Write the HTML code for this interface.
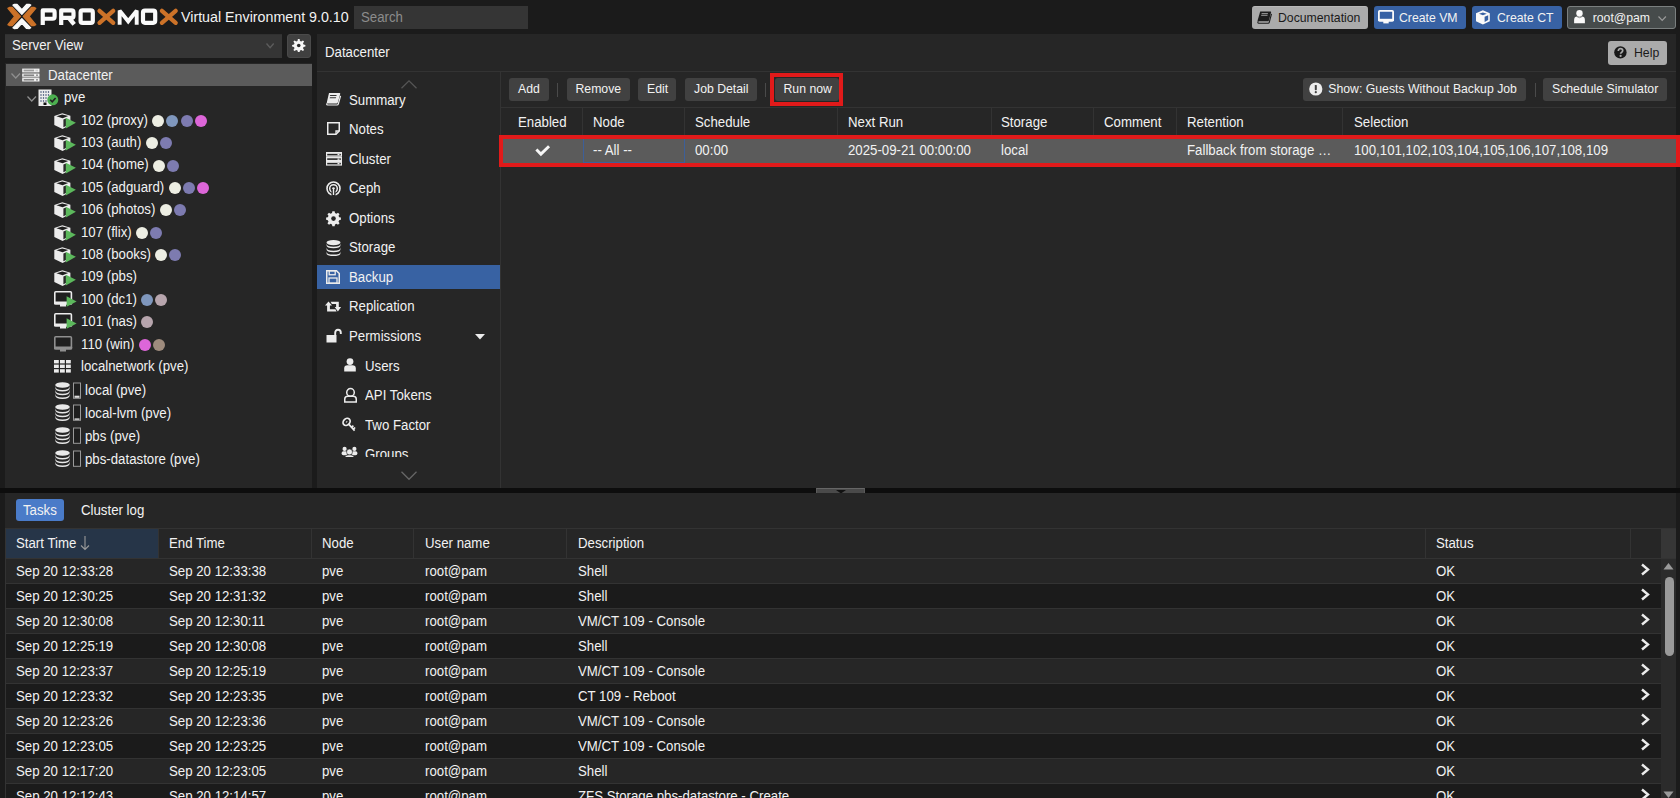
<!DOCTYPE html>
<html><head><meta charset="utf-8">
<style>
*{margin:0;padding:0;box-sizing:border-box}
html,body{width:1680px;height:798px;overflow:hidden;background:#1b1b1b;font-family:"Liberation Sans",sans-serif;color:#f2f2f2}
.a{position:absolute}
.t{position:absolute;font-size:14.7px;line-height:16px;white-space:nowrap;color:#f2f2f2;transform:scaleX(0.9014);transform-origin:0 0}
.t12{position:absolute;font-size:12.25px;line-height:16px;white-space:nowrap;color:#f2f2f2}
.btn{position:absolute;background:#414141;border-radius:3px}
.hl{position:absolute;height:1px;background:#333}
.vl{position:absolute;width:1px;background:#333}
svg{position:absolute;overflow:visible}
</style></head><body>

<!-- ============ TOP BAR ============ -->
<div id="top">
<svg style="left:0;top:0" width="180" height="34" viewBox="0 0 180 34">
<g stroke-linejoin="round" stroke-width="1.2">
<polygon points="7.9,8.3 9.4,7.4 12.3,7.4 20.5,16.47 12.3,25.6 9.4,25.6 7.9,24.7 14.6,16.47" fill="#cc7228" stroke="#cc7228"/>
<polygon points="35.8,8.3 34.3,7.4 31.4,7.4 23.2,16.47 31.4,25.6 34.3,25.6 35.8,24.7 29.1,16.47" fill="#cc7228" stroke="#cc7228"/>
<polygon points="12.9,5.1 14.5,4.3 17.1,4.4 21.86,9.6 26.6,4.4 29.2,4.3 30.8,5.1 21.86,14.3" fill="#fafafa" stroke="#fafafa"/>
<polygon points="12.9,27.8 14.5,28.6 17.1,28.5 21.86,23.3 26.6,28.5 29.2,28.6 30.8,27.8 21.86,18.6" fill="#fafafa" stroke="#fafafa"/>
</g>
<g fill="none" stroke="#fafafa" stroke-width="4.2" stroke-linejoin="round">
<path d="M42.75,25 V10.4 H52.6 Q54.6,10.4 54.6,12.4 V16.8 Q54.6,18.75 52.6,18.75 H42.75"/>
<path d="M61.2,25 V10.4 H71.4 Q73.5,10.4 73.5,12.4 V15.8 Q73.5,17.9 71.4,17.9 H61.2"/>
<path d="M68.6,17.5 L74.2,24.3" stroke-linecap="butt" stroke-width="4.4"/>
<rect x="80.6" y="10.45" width="12.2" height="12.45" rx="2"/>
<path d="M119.65,24.7 V10.6 L128.2,21.3 L136.7,10.6 V24.7" stroke-width="3.9" stroke-linejoin="miter" stroke-miterlimit="3"/>
<rect x="143" y="10.7" width="12.2" height="12.1" rx="2"/>
</g>
<g fill="none" stroke="#cc7228" stroke-width="4.3" stroke-linecap="round">
<path d="M99.5,10.8 L113.2,22.8 M113.2,10.8 L99.5,22.8"/>
<path d="M161.9,10.9 L175.7,22.8 M175.7,10.9 L161.9,22.8"/>
</g>
</svg>
<div class="a" style="left:181px;top:9px;font-size:14.25px;line-height:16px;color:#f2f2f2;white-space:nowrap">Virtual Environment 9.0.10</div>
<div class="a" style="left:354px;top:6px;width:174px;height:23px;background:#353535"></div>
<div class="t" style="left:361.4px;top:9px;color:#8c8c8c">Search</div>

<div class="btn" style="left:1252px;top:6px;width:116px;height:23px;background:#ababab;border-top:1px solid #b8b8b8"></div>
<svg style="left:1257px;top:10.5px" width="15" height="13" viewBox="0 0 15 13"><path d="M3.2,0.5 H13.6 Q14.3,0.5 14.1,1.3 L11.9,9.6 Q11.7,10.3 11,10.3 H1.2 Q0.4,10.3 0.6,9.5 Z" fill="#1d1d1d"/><path d="M1.3,10.2 Q0.2,11.9 1.8,12.2 H11.3 Q12,12.2 12.2,11.5 L14.5,2.8" fill="none" stroke="#1d1d1d" stroke-width="1.1"/><path d="M4.6,2.6 H10.9 M4.2,4.3 H10.5" stroke="#a8a8a8" stroke-width="0.9"/></svg>
<div class="t12" style="left:1278px;top:10px;color:#1a1a1a">Documentation</div>

<div class="btn" style="left:1374px;top:6px;width:92px;height:23px;background:#3862a4"></div>
<svg style="left:1377.5px;top:9.5px" width="17" height="14" viewBox="0 0 17 14"><rect x="0.9" y="0.9" width="14.2" height="10" rx="0.8" fill="none" stroke="#fafafa" stroke-width="1.8"/><rect x="0" y="8.8" width="16" height="2.2" fill="#fafafa"/><rect x="5.3" y="11" width="5.4" height="2.4" fill="#fafafa"/></svg>
<div class="t12" style="left:1399px;top:10px">Create VM</div>

<div class="btn" style="left:1472px;top:6px;width:90px;height:23px;background:#3862a4"></div>
<svg style="left:1476px;top:10px" width="14" height="15" viewBox="0 0 14 15"><path d="M6.9,0.2 L13.8,3.2 V11.3 L6.9,14.6 L0,11.3 V3.2 Z" fill="#fafafa"/><path d="M6.9,2.4 L10.8,3.8 L6.9,5.3 L3,3.8 Z" fill="#3862a4"/><path d="M8.6,6.8 L12.2,5.3 V10.1 L8.6,11.9 Z" fill="#3862a4"/></svg>
<div class="t12" style="left:1497px;top:10px">Create CT</div>

<div class="btn" style="left:1567px;top:6px;width:108.5px;height:23px;background:#464b4b;border:1px solid #7a7f7f"></div>
<svg style="left:1573.8px;top:10.2px" width="12" height="14" viewBox="0 0 12 14"><circle cx="5.5" cy="3.3" r="3.2" fill="#fafafa"/><path d="M0.1,13.2 V10 Q0.1,6.6 3.3,6.6 H7.7 Q10.9,6.6 10.9,10 V13.2 Z" fill="#fafafa"/><path d="M3.2,6.8 Q5.5,8.6 7.8,6.8" fill="none" stroke="#464b4b" stroke-width="0.6"/></svg>
<div class="t12" style="left:1592.7px;top:10px">root@pam</div>
<svg style="left:1657.8px;top:16px" width="9" height="5"><path d="M0.5,0.5 L4.2,4.3 L7.9,0.5" fill="none" stroke="#9a9a9a" stroke-width="1.2"/></svg>
</div>

<!-- ============ LEFT TREE ============ -->
<div class="a" style="left:5px;top:34px;width:277px;height:24px;background:#353535;border-top:1px solid #303030"></div>
<div class="t" style="left:12px;top:37px">Server View</div>
<svg style="left:266px;top:43px" width="9" height="6"><path d="M0.5,0.5 L4.1,4.6 L7.7,0.5" fill="none" stroke="#5c5c5c" stroke-width="1.4"/></svg>
<div class="btn" style="left:287px;top:34px;width:23.5px;height:24px;background:#404040;border:1px solid #4a4a4a"></div>
<svg style="left:292px;top:39px" width="14" height="13" viewBox="0 0 14 13"><path d="M5.9,0 H7.6 L8,1.9 L9.3,2.5 L10.9,1.4 L12.1,2.6 L11,4.2 L11.5,5.5 L13.4,5.9 V7.6 L11.5,8 L11,9.3 L12.1,10.9 L10.9,12.1 L9.3,11 L8,11.5 L7.6,13 H5.9 L5.5,11.5 L4.2,11 L2.6,12.1 L1.4,10.9 L2.5,9.3 L2,8 L0.1,7.6 V5.9 L2,5.5 L2.5,4.2 L1.4,2.6 L2.6,1.4 L4.2,2.5 L5.5,1.9 Z" fill="#f6f6f6"/><circle cx="6.75" cy="6.5" r="1.8" fill="#2a2a2a"/></svg>
<div class="a" style="left:5px;top:63px;width:306.5px;height:425px;background:#262626"></div>
<div class="a" style="left:6px;top:63.5px;width:305.5px;height:22.2px;background:#5b5b5b"></div>
<svg style="left:10.5px;top:73px" width="10" height="6"><path d="M0.5,0.5 L4.75,5 L9,0.5" fill="none" stroke="#8f8f8f" stroke-width="1.3"/></svg>
<svg style="left:21.5px;top:67.6px" width="18" height="14" viewBox="0 0 18 14"><rect x="0.2" y="0.6" width="17.3" height="3.8" fill="#f4f4f4"/><rect x="1.6" y="1.6" width="10.5" height="1.8" fill="#9c9c9c"/><rect x="13.4" y="1.6" width="2.6" height="1.8" fill="#cfcfcf"/><rect x="0.2" y="5.5" width="17.3" height="3.3" fill="#f4f4f4"/><rect x="1.6" y="6.6" width="10.5" height="1.1" fill="#555"/><rect x="14.3" y="6.5" width="1.4" height="1.3" fill="#555"/><rect x="0.2" y="8.8" width="17.3" height="1.3" fill="#a0a0a0"/><rect x="0.2" y="10.1" width="17.3" height="3.4" fill="#f4f4f4"/><rect x="1.6" y="11.3" width="10.5" height="1.1" fill="#555"/><rect x="14.3" y="11.2" width="1.4" height="1.3" fill="#555"/></svg>
<div class="t" style="left:48px;top:67.0px;">Datacenter</div>
<svg style="left:26.8px;top:95.8px" width="10" height="6"><path d="M0.5,0.5 L4.75,5 L9,0.5" fill="none" stroke="#8f8f8f" stroke-width="1.3"/></svg>
<svg style="left:38px;top:88.5px" width="22" height="18" viewBox="0 0 22 18"><rect x="0.5" y="0.5" width="13" height="16.5" fill="#ececec"/><rect x="2.4" y="2.2" width="1.2" height="1.6" fill="#4a5a7a"/><rect x="2.4" y="5.2" width="1.2" height="1.6" fill="#4a5a7a"/><rect x="2.4" y="8.2" width="1.2" height="1.6" fill="#4a5a7a"/><rect x="2.4" y="11.2" width="1.2" height="1.6" fill="#4a5a7a"/><rect x="4.9" y="2.2" width="1.2" height="1.6" fill="#4a5a7a"/><rect x="4.9" y="5.2" width="1.2" height="1.6" fill="#4a5a7a"/><rect x="4.9" y="8.2" width="1.2" height="1.6" fill="#4a5a7a"/><rect x="4.9" y="11.2" width="1.2" height="1.6" fill="#4a5a7a"/><rect x="7.4" y="2.2" width="1.2" height="1.6" fill="#4a5a7a"/><rect x="7.4" y="5.2" width="1.2" height="1.6" fill="#4a5a7a"/><rect x="7.4" y="8.2" width="1.2" height="1.6" fill="#4a5a7a"/><rect x="7.4" y="11.2" width="1.2" height="1.6" fill="#4a5a7a"/><rect x="9.9" y="2.2" width="1.2" height="1.6" fill="#4a5a7a"/><rect x="9.9" y="5.2" width="1.2" height="1.6" fill="#4a5a7a"/><rect x="9.9" y="8.2" width="1.2" height="1.6" fill="#4a5a7a"/><rect x="9.9" y="11.2" width="1.2" height="1.6" fill="#4a5a7a"/><rect x="5.5" y="13.5" width="3" height="2.5" fill="#111"/><circle cx="14.8" cy="10.8" r="5.5" fill="#4caf50"/><path d="M12.2,10.8 L14.2,12.8 L17.6,9" fill="none" stroke="#222" stroke-width="1.6"/></svg>
<div class="t" style="left:64px;top:89.0px;">pve</div>
<svg style="left:54px;top:112.8px" width="23" height="17" viewBox="0 0 23 17"><path d="M8.3,0.2 L16.4,2.7 L16.4,11.8 L8.6,16.0 L0.3,12.0 L0.3,2.9 Z" fill="#ececec"/><path d="M8.2,1.6 L14.3,3.1 L8.6,5.3 L2.4,3.3 Z" fill="#1e1e1e"/><path d="M9.4,6.6 L9.4,14.2 L12,13 L12,5.6 Z" fill="#2a2a2a"/><path d="M11.8,4.8 L21.9,9.8 L11.8,15.4 Z" fill="#5cb85c"/></svg>
<div class="t" style="left:80.8px;top:112.0px;">102 (proxy)</div>
<div class="a" style="left:152.2px;top:114.7px;width:12px;height:12px;border-radius:6px;background:#edeee3"></div>
<div class="a" style="left:166.4px;top:114.7px;width:12px;height:12px;border-radius:6px;background:#7f97bd"></div>
<div class="a" style="left:180.6px;top:114.7px;width:12px;height:12px;border-radius:6px;background:#7d7bb0"></div>
<div class="a" style="left:194.8px;top:114.7px;width:12px;height:12px;border-radius:6px;background:#dd66d9"></div>
<svg style="left:54px;top:135.2px" width="23" height="17" viewBox="0 0 23 17"><path d="M8.3,0.2 L16.4,2.7 L16.4,11.8 L8.6,16.0 L0.3,12.0 L0.3,2.9 Z" fill="#ececec"/><path d="M8.2,1.6 L14.3,3.1 L8.6,5.3 L2.4,3.3 Z" fill="#1e1e1e"/><path d="M9.4,6.6 L9.4,14.2 L12,13 L12,5.6 Z" fill="#2a2a2a"/><path d="M11.8,4.8 L21.9,9.8 L11.8,15.4 Z" fill="#5cb85c"/></svg>
<div class="t" style="left:80.8px;top:134.0px;">103 (auth)</div>
<div class="a" style="left:145.6px;top:137.1px;width:12px;height:12px;border-radius:6px;background:#edeee3"></div>
<div class="a" style="left:159.8px;top:137.1px;width:12px;height:12px;border-radius:6px;background:#7d7bb0"></div>
<svg style="left:54px;top:157.59999999999997px" width="23" height="17" viewBox="0 0 23 17"><path d="M8.3,0.2 L16.4,2.7 L16.4,11.8 L8.6,16.0 L0.3,12.0 L0.3,2.9 Z" fill="#ececec"/><path d="M8.2,1.6 L14.3,3.1 L8.6,5.3 L2.4,3.3 Z" fill="#1e1e1e"/><path d="M9.4,6.6 L9.4,14.2 L12,13 L12,5.6 Z" fill="#2a2a2a"/><path d="M11.8,4.8 L21.9,9.8 L11.8,15.4 Z" fill="#5cb85c"/></svg>
<div class="t" style="left:80.8px;top:156.0px;">104 (home)</div>
<div class="a" style="left:153.0px;top:159.5px;width:12px;height:12px;border-radius:6px;background:#edeee3"></div>
<div class="a" style="left:167.2px;top:159.5px;width:12px;height:12px;border-radius:6px;background:#7d7bb0"></div>
<svg style="left:54px;top:179.99999999999997px" width="23" height="17" viewBox="0 0 23 17"><path d="M8.3,0.2 L16.4,2.7 L16.4,11.8 L8.6,16.0 L0.3,12.0 L0.3,2.9 Z" fill="#ececec"/><path d="M8.2,1.6 L14.3,3.1 L8.6,5.3 L2.4,3.3 Z" fill="#1e1e1e"/><path d="M9.4,6.6 L9.4,14.2 L12,13 L12,5.6 Z" fill="#2a2a2a"/><path d="M11.8,4.8 L21.9,9.8 L11.8,15.4 Z" fill="#5cb85c"/></svg>
<div class="t" style="left:80.8px;top:179.0px;">105 (adguard)</div>
<div class="a" style="left:168.5px;top:181.9px;width:12px;height:12px;border-radius:6px;background:#edeee3"></div>
<div class="a" style="left:182.7px;top:181.9px;width:12px;height:12px;border-radius:6px;background:#7d7bb0"></div>
<div class="a" style="left:196.9px;top:181.9px;width:12px;height:12px;border-radius:6px;background:#dd66d9"></div>
<svg style="left:54px;top:202.39999999999998px" width="23" height="17" viewBox="0 0 23 17"><path d="M8.3,0.2 L16.4,2.7 L16.4,11.8 L8.6,16.0 L0.3,12.0 L0.3,2.9 Z" fill="#ececec"/><path d="M8.2,1.6 L14.3,3.1 L8.6,5.3 L2.4,3.3 Z" fill="#1e1e1e"/><path d="M9.4,6.6 L9.4,14.2 L12,13 L12,5.6 Z" fill="#2a2a2a"/><path d="M11.8,4.8 L21.9,9.8 L11.8,15.4 Z" fill="#5cb85c"/></svg>
<div class="t" style="left:80.8px;top:201.0px;">106 (photos)</div>
<div class="a" style="left:159.6px;top:204.3px;width:12px;height:12px;border-radius:6px;background:#edeee3"></div>
<div class="a" style="left:173.8px;top:204.3px;width:12px;height:12px;border-radius:6px;background:#7d7bb0"></div>
<svg style="left:54px;top:224.79999999999998px" width="23" height="17" viewBox="0 0 23 17"><path d="M8.3,0.2 L16.4,2.7 L16.4,11.8 L8.6,16.0 L0.3,12.0 L0.3,2.9 Z" fill="#ececec"/><path d="M8.2,1.6 L14.3,3.1 L8.6,5.3 L2.4,3.3 Z" fill="#1e1e1e"/><path d="M9.4,6.6 L9.4,14.2 L12,13 L12,5.6 Z" fill="#2a2a2a"/><path d="M11.8,4.8 L21.9,9.8 L11.8,15.4 Z" fill="#5cb85c"/></svg>
<div class="t" style="left:80.8px;top:224.0px;">107 (flix)</div>
<div class="a" style="left:136.0px;top:226.7px;width:12px;height:12px;border-radius:6px;background:#edeee3"></div>
<div class="a" style="left:150.2px;top:226.7px;width:12px;height:12px;border-radius:6px;background:#7d7bb0"></div>
<svg style="left:54px;top:247.2px" width="23" height="17" viewBox="0 0 23 17"><path d="M8.3,0.2 L16.4,2.7 L16.4,11.8 L8.6,16.0 L0.3,12.0 L0.3,2.9 Z" fill="#ececec"/><path d="M8.2,1.6 L14.3,3.1 L8.6,5.3 L2.4,3.3 Z" fill="#1e1e1e"/><path d="M9.4,6.6 L9.4,14.2 L12,13 L12,5.6 Z" fill="#2a2a2a"/><path d="M11.8,4.8 L21.9,9.8 L11.8,15.4 Z" fill="#5cb85c"/></svg>
<div class="t" style="left:80.8px;top:246.0px;">108 (books)</div>
<div class="a" style="left:155.2px;top:249.1px;width:12px;height:12px;border-radius:6px;background:#edeee3"></div>
<div class="a" style="left:169.4px;top:249.1px;width:12px;height:12px;border-radius:6px;background:#7d7bb0"></div>
<svg style="left:54px;top:269.59999999999997px" width="23" height="17" viewBox="0 0 23 17"><path d="M8.3,0.2 L16.4,2.7 L16.4,11.8 L8.6,16.0 L0.3,12.0 L0.3,2.9 Z" fill="#ececec"/><path d="M8.2,1.6 L14.3,3.1 L8.6,5.3 L2.4,3.3 Z" fill="#1e1e1e"/><path d="M9.4,6.6 L9.4,14.2 L12,13 L12,5.6 Z" fill="#2a2a2a"/><path d="M11.8,4.8 L21.9,9.8 L11.8,15.4 Z" fill="#5cb85c"/></svg>
<div class="t" style="left:80.8px;top:268.0px;">109 (pbs)</div>
<svg style="left:54.2px;top:290.99999999999994px" width="24" height="17" viewBox="0 0 24 17"><rect x="0.8" y="0.8" width="16.6" height="12" rx="1" fill="#1f1f1f" stroke="#ececec" stroke-width="1.6"/><rect x="0" y="10.6" width="18.2" height="2.8" rx="0.6" fill="#ececec"/><rect x="6" y="13" width="6" height="2.5" fill="#ececec"/><path d="M12.6,5.2 L22.6,10.5 L12.6,15.8 Z" fill="#5cb85c"/></svg>
<div class="t" style="left:80.8px;top:291.0px;">100 (dc1)</div>
<div class="a" style="left:141.2px;top:293.9px;width:12px;height:12px;border-radius:6px;background:#7f97bd"></div>
<div class="a" style="left:155.4px;top:293.9px;width:12px;height:12px;border-radius:6px;background:#b7a5ad"></div>
<svg style="left:54.2px;top:313.4px" width="24" height="17" viewBox="0 0 24 17"><rect x="0.8" y="0.8" width="16.6" height="12" rx="1" fill="#1f1f1f" stroke="#ececec" stroke-width="1.6"/><rect x="0" y="10.6" width="18.2" height="2.8" rx="0.6" fill="#ececec"/><rect x="6" y="13" width="6" height="2.5" fill="#ececec"/><path d="M12.6,5.2 L22.6,10.5 L12.6,15.8 Z" fill="#5cb85c"/></svg>
<div class="t" style="left:80.8px;top:313.0px;">101 (nas)</div>
<div class="a" style="left:141.2px;top:316.3px;width:12px;height:12px;border-radius:6px;background:#b7a5ad"></div>
<svg style="left:54.2px;top:335.8px" width="24" height="17" viewBox="0 0 24 17"><rect x="0.8" y="0.8" width="16.6" height="12" rx="1" fill="#1f1f1f" stroke="#8f8f8f" stroke-width="1.6"/><rect x="0" y="10.6" width="18.2" height="2.8" rx="0.6" fill="#8f8f8f"/><rect x="6" y="13" width="6" height="2.5" fill="#8f8f8f"/></svg>
<div class="t" style="left:80.8px;top:336.0px;">110 (win)</div>
<div class="a" style="left:138.7px;top:338.7px;width:12px;height:12px;border-radius:6px;background:#dd66d9"></div>
<div class="a" style="left:152.9px;top:338.7px;width:12px;height:12px;border-radius:6px;background:#9e8b7d"></div>
<svg style="left:54.4px;top:359.5px" width="18" height="14" viewBox="0 0 18 14"><rect x="0" y="0" width="4.8" height="3.4" fill="#ececec"/><rect x="0" y="4.6" width="4.8" height="3.4" fill="#ececec"/><rect x="0" y="9.2" width="4.8" height="3.4" fill="#ececec"/><rect x="6" y="0" width="4.8" height="3.4" fill="#ececec"/><rect x="6" y="4.6" width="4.8" height="3.4" fill="#ececec"/><rect x="6" y="9.2" width="4.8" height="3.4" fill="#ececec"/><rect x="12" y="0" width="4.8" height="3.4" fill="#ececec"/><rect x="12" y="4.6" width="4.8" height="3.4" fill="#ececec"/><rect x="12" y="9.2" width="4.8" height="3.4" fill="#ececec"/></svg>
<div class="t" style="left:80.5px;top:358.0px;">localnetwork (pve)</div>
<svg style="left:54.8px;top:381.5px" width="28" height="18" viewBox="0 0 28 18"><ellipse cx="7.5" cy="3" rx="7.3" ry="2.8" fill="#e8e8e8"/><path d="M0.2,3.9999999999999996 Q0.2,8.0 7.5,8.0 Q14.8,8.0 14.8,3.9999999999999996 L14.8,5.3999999999999995 Q14.8,9.399999999999999 7.5,9.399999999999999 Q0.2,9.399999999999999 0.2,5.3999999999999995 Z" fill="#e8e8e8"/><path d="M0.2,7.800000000000001 Q0.2,11.8 7.5,11.8 Q14.8,11.8 14.8,7.800000000000001 L14.8,9.200000000000001 Q14.8,13.2 7.5,13.2 Q0.2,13.2 0.2,9.200000000000001 Z" fill="#e8e8e8"/><path d="M0.2,11.6 Q0.2,15.6 7.5,15.6 Q14.8,15.6 14.8,11.6 L14.8,13.0 Q14.8,17.0 7.5,17.0 Q0.2,17.0 0.2,13.0 Z" fill="#e8e8e8"/><rect x="18.5" y="1" width="7" height="15.3" fill="#1f1f1f" stroke="#9a9a9a" stroke-width="1"/><rect x="19.5" y="13.7" width="5" height="2.1" fill="#e0e0e0"/></svg>
<div class="t" style="left:85.1px;top:382.0px;">local (pve)</div>
<svg style="left:54.8px;top:404.45px" width="28" height="18" viewBox="0 0 28 18"><ellipse cx="7.5" cy="3" rx="7.3" ry="2.8" fill="#e8e8e8"/><path d="M0.2,3.9999999999999996 Q0.2,8.0 7.5,8.0 Q14.8,8.0 14.8,3.9999999999999996 L14.8,5.3999999999999995 Q14.8,9.399999999999999 7.5,9.399999999999999 Q0.2,9.399999999999999 0.2,5.3999999999999995 Z" fill="#e8e8e8"/><path d="M0.2,7.800000000000001 Q0.2,11.8 7.5,11.8 Q14.8,11.8 14.8,7.800000000000001 L14.8,9.200000000000001 Q14.8,13.2 7.5,13.2 Q0.2,13.2 0.2,9.200000000000001 Z" fill="#e8e8e8"/><path d="M0.2,11.6 Q0.2,15.6 7.5,15.6 Q14.8,15.6 14.8,11.6 L14.8,13.0 Q14.8,17.0 7.5,17.0 Q0.2,17.0 0.2,13.0 Z" fill="#e8e8e8"/><rect x="18.5" y="1" width="7" height="15.3" fill="#1f1f1f" stroke="#9a9a9a" stroke-width="1"/><rect x="19.5" y="14.4" width="5" height="1.4" fill="#e0e0e0"/></svg>
<div class="t" style="left:85.1px;top:405.0px;">local-lvm (pve)</div>
<svg style="left:54.8px;top:427.4px" width="28" height="18" viewBox="0 0 28 18"><ellipse cx="7.5" cy="3" rx="7.3" ry="2.8" fill="#e8e8e8"/><path d="M0.2,3.9999999999999996 Q0.2,8.0 7.5,8.0 Q14.8,8.0 14.8,3.9999999999999996 L14.8,5.3999999999999995 Q14.8,9.399999999999999 7.5,9.399999999999999 Q0.2,9.399999999999999 0.2,5.3999999999999995 Z" fill="#e8e8e8"/><path d="M0.2,7.800000000000001 Q0.2,11.8 7.5,11.8 Q14.8,11.8 14.8,7.800000000000001 L14.8,9.200000000000001 Q14.8,13.2 7.5,13.2 Q0.2,13.2 0.2,9.200000000000001 Z" fill="#e8e8e8"/><path d="M0.2,11.6 Q0.2,15.6 7.5,15.6 Q14.8,15.6 14.8,11.6 L14.8,13.0 Q14.8,17.0 7.5,17.0 Q0.2,17.0 0.2,13.0 Z" fill="#e8e8e8"/><rect x="18.5" y="1" width="7" height="15.3" fill="#1f1f1f" stroke="#9a9a9a" stroke-width="1"/></svg>
<div class="t" style="left:85.1px;top:428.0px;">pbs (pve)</div>
<svg style="left:54.8px;top:450.34999999999997px" width="28" height="18" viewBox="0 0 28 18"><ellipse cx="7.5" cy="3" rx="7.3" ry="2.8" fill="#e8e8e8"/><path d="M0.2,3.9999999999999996 Q0.2,8.0 7.5,8.0 Q14.8,8.0 14.8,3.9999999999999996 L14.8,5.3999999999999995 Q14.8,9.399999999999999 7.5,9.399999999999999 Q0.2,9.399999999999999 0.2,5.3999999999999995 Z" fill="#e8e8e8"/><path d="M0.2,7.800000000000001 Q0.2,11.8 7.5,11.8 Q14.8,11.8 14.8,7.800000000000001 L14.8,9.200000000000001 Q14.8,13.2 7.5,13.2 Q0.2,13.2 0.2,9.200000000000001 Z" fill="#e8e8e8"/><path d="M0.2,11.6 Q0.2,15.6 7.5,15.6 Q14.8,15.6 14.8,11.6 L14.8,13.0 Q14.8,17.0 7.5,17.0 Q0.2,17.0 0.2,13.0 Z" fill="#e8e8e8"/><rect x="18.5" y="1" width="7" height="15.3" fill="#1f1f1f" stroke="#9a9a9a" stroke-width="1"/></svg>
<div class="t" style="left:85.1px;top:451.0px;">pbs-datastore (pve)</div>


<!-- ============ CONTENT ============ -->
<div class="a" style="left:317px;top:34px;width:1359px;height:454px;background:#262626"></div>
<div class="t" style="left:325.2px;top:44px">Datacenter</div>
<div class="btn" style="left:1608px;top:41px;width:59px;height:24px;background:#ababab"></div>
<svg style="left:1614px;top:46px" width="13" height="13" viewBox="0 0 13 13"><circle cx="6.4" cy="6.4" r="6.2" fill="#1a1a1a"/><path d="M4.3,4.9 Q4.3,2.7 6.5,2.7 Q8.7,2.7 8.7,4.6 Q8.7,5.8 7.5,6.4 Q6.6,6.9 6.6,7.8" fill="none" stroke="#ababab" stroke-width="1.7"/><circle cx="6.6" cy="9.9" r="1.1" fill="#ababab"/></svg>
<div class="t12" style="left:1634px;top:45px;color:#1a1a1a">Help</div>
<div class="hl" style="left:317px;top:71px;width:1359px"></div>
<div class="vl" style="left:500px;top:72px;height:416px"></div>
<div class="a" style="left:317px;top:265px;width:183px;height:24px;background:#3862a3"></div>
<svg style="left:401px;top:80px" width="16" height="9"><path d="M0.5,8.3 L8,0.8 L15.5,8.3" fill="none" stroke="#555" stroke-width="1.3"/></svg>
<div class="a" style="left:317px;top:72px;width:183px;height:385px;overflow:hidden">
<svg style="left:9px;top:20.4px" width="16" height="15"><path d="M3,1 H13.5 Q14.5,1 14.2,2 L11.8,10.5 Q11.5,11.5 10.5,11.5 H1.8 Q0.5,11.5 0.8,10.5 Z" fill="#ececec"/><path d="M1.2,11.5 Q0,12.8 1.6,13 H11 Q12,13 12.3,12 L14.6,3.8" fill="none" stroke="#ececec" stroke-width="1.2"/><rect x="5" y="3" width="6.5" height="1.1" fill="#333" transform="skewX(-15)"/><rect x="5.3" y="5.2" width="6.2" height="1.1" fill="#333" transform="skewX(-15)"/></svg>
<div class="t" style="left:31.600000000000023px;top:20.0px;">Summary</div>
<svg style="left:9.5px;top:50.0px" width="16" height="15"><path d="M0.75,0.75 H12.25 V9 L9,12.25 H0.75 Z" fill="none" stroke="#ececec" stroke-width="1.5"/><path d="M12.25,9 H9 V12.25" fill="none" stroke="#ececec" stroke-width="1.3"/></svg>
<div class="t" style="left:31.600000000000023px;top:49.0px;">Notes</div>
<svg style="left:9px;top:79.5px" width="16" height="15"><rect x="0.6" y="0.6" width="14.8" height="3.4" fill="none" stroke="#ececec" stroke-width="1.2"/><rect x="0" y="0.6" width="16" height="1.2" fill="#ececec"/><rect x="11.5" y="2.0" width="2" height="1.3" fill="#ececec"/><rect x="0.6" y="5.1" width="14.8" height="3.4" fill="none" stroke="#ececec" stroke-width="1.2"/><rect x="0" y="5.1" width="16" height="1.2" fill="#ececec"/><rect x="11.5" y="6.5" width="2" height="1.3" fill="#ececec"/><rect x="0.6" y="9.6" width="14.8" height="3.4" fill="none" stroke="#ececec" stroke-width="1.2"/><rect x="0" y="9.6" width="16" height="1.2" fill="#ececec"/><rect x="11.5" y="11.0" width="2" height="1.3" fill="#ececec"/></svg>
<div class="t" style="left:31.600000000000023px;top:79.0px;">Cluster</div>
<svg style="left:9px;top:109.1px" width="16" height="15"><g fill="none" stroke="#ececec"><circle cx="7.5" cy="7.5" r="6.5" stroke-width="1.6"/><circle cx="7.5" cy="7.5" r="3.8" stroke-width="1.5"/></g><circle cx="7.5" cy="7.5" r="1.3" fill="#ececec"/><rect x="5.5" y="8" width="4" height="7" fill="#262626"/><rect x="6.8" y="7.5" width="1.4" height="6.5" fill="#ececec"/></svg>
<div class="t" style="left:31.600000000000023px;top:108.0px;">Ceph</div>
<svg style="left:9px;top:138.6px" width="16" height="15"><path d="M6.2,0.3 H8.8 L9.2,2.3 L10.9,3.1 L12.6,1.9 L14.4,3.7 L13.2,5.4 L13.9,7.1 L15.9,7.5 V10 L13.9,10.4 L13.2,12.1 L14.4,13.8 L12.6,15.6 L10.9,14.4 L9.2,15.2 L8.8,17.2 H6.2 L5.8,15.2 L4.1,14.4 L2.4,15.6 L0.6,13.8 L1.8,12.1 L1.1,10.4 L-0.9,10 V7.5 L1.1,7.1 L1.8,5.4 L0.6,3.7 L2.4,1.9 L4.1,3.1 L5.8,2.3 Z" transform="translate(0.9,0) scale(0.88)" fill="#ececec"/><circle cx="7.5" cy="7.6" r="2.3" fill="#262626"/></svg>
<div class="t" style="left:31.600000000000023px;top:138.0px;">Options</div>
<svg style="left:9px;top:168.2px" width="16" height="15"><ellipse cx="7.5" cy="2.6" rx="7" ry="2.6" fill="#ececec"/><path d="M0.5,3.6 Q0.5,6.800000000000001 7.5,6.800000000000001 Q14.5,6.800000000000001 14.5,3.6 V5.1 Q14.5,8.3 7.5,8.3 Q0.5,8.3 0.5,5.1 Z" fill="#ececec"/><path d="M0.5,7.5 Q0.5,10.7 7.5,10.7 Q14.5,10.7 14.5,7.5 V9.0 Q14.5,12.2 7.5,12.2 Q0.5,12.2 0.5,9.0 Z" fill="#ececec"/><path d="M0.5,11.4 Q0.5,14.600000000000001 7.5,14.600000000000001 Q14.5,14.600000000000001 14.5,11.4 V12.9 Q14.5,16.1 7.5,16.1 Q0.5,16.1 0.5,12.9 Z" fill="#ececec"/></svg>
<div class="t" style="left:31.600000000000023px;top:167.0px;">Storage</div>
<svg style="left:9px;top:197.7px" width="16" height="15"><path d="M0.75,0.75 H10.5 L13.25,3.5 V13.25 H0.75 Z" fill="none" stroke="#ececec" stroke-width="1.5"/><rect x="3.2" y="0.75" width="6" height="4" fill="none" stroke="#ececec" stroke-width="1.3"/><rect x="3" y="8" width="8" height="5.25" fill="none" stroke="#ececec" stroke-width="1.3"/></svg>
<div class="t" style="left:31.600000000000023px;top:197.0px;">Backup</div>
<svg style="left:9px;top:227.2px" width="16" height="15"><path d="M2.5,2.55 L6,6.45 H3.9 V10.3 H9.4 L10.6,12.45 H1.1 V6.45 H-1 Z" fill="#ececec"/><path d="M4.6,2.75 H12.8 V7.9 H15.1 L11.9,12.45 L8.7,7.9 H10.1 V4.95 H5.9 Z" fill="#ececec"/></svg>
<div class="t" style="left:31.600000000000023px;top:226.0px;">Replication</div>
<svg style="left:9px;top:256.8px" width="16" height="15"><path d="M9.2,6 V3.8 Q9.2,0.8 12,0.8 Q14.8,0.8 14.8,3.8 V5" fill="none" stroke="#ececec" stroke-width="1.9"/><rect x="0.5" y="6" width="10" height="7.5" fill="#ececec"/></svg>
<div class="t" style="left:31.600000000000023px;top:256.0px;">Permissions</div>
<svg style="left:26.69999999999999px;top:286.3px" width="16" height="15"><circle cx="6" cy="3.6" r="3.4" fill="#ececec"/><path d="M0.2,13.5 V10.5 Q0.2,7.3 3.5,7.3 H8.5 Q11.8,7.3 11.8,10.5 V13.5 Z" fill="#ececec"/></svg>
<div class="t" style="left:47.69999999999999px;top:286.0px;">Users</div>
<svg style="left:26.5px;top:315.9px" width="16" height="15"><circle cx="6.5" cy="4.4" r="3.8" fill="none" stroke="#ececec" stroke-width="1.5"/><path d="M0.75,14 V11 Q0.75,8.2 3.8,8.2 H9.2 Q12.25,8.2 12.25,11 V14 Z" fill="none" stroke="#ececec" stroke-width="1.5"/></svg>
<div class="t" style="left:47.69999999999999px;top:315.0px;">API Tokens</div>
<svg style="left:26px;top:345.4px" width="16" height="15"><ellipse cx="3.6" cy="4.9" rx="3.9" ry="3.1" transform="rotate(-45 3.6 4.9)" fill="none" stroke="#ececec" stroke-width="1.8"/><ellipse cx="3.6" cy="4.9" rx="1" ry="0.5" transform="rotate(-45 3.6 4.9)" fill="#ececec"/><path d="M5.9,7.4 L11.6,13.6 M8.6,10.4 L10.4,8.7 M10.3,12.2 L12.1,10.5" fill="none" stroke="#ececec" stroke-width="1.7"/></svg>
<div class="t" style="left:47.69999999999999px;top:345.0px;">Two Factor</div>
<svg style="left:25px;top:375.0px" width="16" height="15"><circle cx="2.6" cy="1.9" r="2.1" fill="#ececec"/><circle cx="12.4" cy="1.9" r="2.1" fill="#ececec"/><rect x="-0.4" y="4.2" width="5.8" height="4" rx="1.8" fill="#ececec"/><rect x="9.6" y="4.2" width="5.8" height="4" rx="1.8" fill="#ececec"/><circle cx="7.5" cy="5" r="3" fill="#ececec" stroke="#262626" stroke-width="0.6"/><path d="M2.8,10.6 Q3.2,8 6,8 H9 Q11.8,8 12.2,10.6 Z" fill="#ececec" stroke="#262626" stroke-width="0.5"/></svg>
<div class="t" style="left:47.69999999999999px;top:374.0px;">Groups</div>
</div>
<svg style="left:475px;top:333.5px" width="11" height="6"><path d="M0,0 H10 L5,5.5 Z" fill="#ececec"/></svg>
<svg style="left:401px;top:471px" width="16" height="9"><path d="M0.5,0.8 L8,8.3 L15.5,0.8" fill="none" stroke="#666" stroke-width="1.3"/></svg>

<div class="btn" style="left:509.3px;top:77.5px;width:39.599999999999966px;height:23.400000000000006px;background:#414141"></div>
<div class="t12" style="left:518px;top:81.0px;">Add</div>
<div class="btn" style="left:566.7px;top:77.5px;width:63.0px;height:23.400000000000006px;background:#414141"></div>
<div class="t12" style="left:575.5px;top:81.0px;">Remove</div>
<div class="btn" style="left:638px;top:77.5px;width:38px;height:23.400000000000006px;background:#414141"></div>
<div class="t12" style="left:647px;top:81.0px;">Edit</div>
<div class="btn" style="left:685.3px;top:77.5px;width:71.30000000000007px;height:23.400000000000006px;background:#414141"></div>
<div class="t12" style="left:694px;top:81.0px;">Job Detail</div>
<div class="btn" style="left:775px;top:77.5px;width:64px;height:23.400000000000006px;background:#414141"></div>
<div class="t12" style="left:783.5px;top:81.0px;">Run now</div>
<div class="a" style="left:557.2px;top:83px;width:1px;height:14px;background:#4a4a4a"></div>
<div class="a" style="left:764.9px;top:83px;width:1px;height:14px;background:#4a4a4a"></div>
<div class="btn" style="left:1303.3px;top:77.5px;width:222.5px;height:23.400000000000006px;background:#414141"></div>
<svg style="left:1309px;top:82px" width="14" height="14"><circle cx="6.8" cy="7" r="6.6" fill="#ececec"/><rect x="5.8" y="3" width="2" height="5.2" rx="0.6" fill="#414141"/><circle cx="6.8" cy="10.2" r="1.1" fill="#414141"/></svg>
<div class="t12" style="left:1328.3px;top:81.0px;">Show: Guests Without Backup Job</div>
<div class="a" style="left:1535px;top:83px;width:1px;height:14px;background:#4a4a4a"></div>
<div class="btn" style="left:1543.3px;top:77.5px;width:123.40000000000009px;height:23.400000000000006px;background:#414141"></div>
<div class="t12" style="left:1552px;top:81.0px;">Schedule Simulator</div>
<div class="hl" style="left:501px;top:107px;width:1175px"></div>
<div class="vl" style="left:582.2px;top:108px;height:27px"></div>
<div class="vl" style="left:684.1px;top:108px;height:27px"></div>
<div class="vl" style="left:836.9px;top:108px;height:27px"></div>
<div class="vl" style="left:991.2px;top:108px;height:27px"></div>
<div class="vl" style="left:1092.9px;top:108px;height:27px"></div>
<div class="vl" style="left:1175.9px;top:108px;height:27px"></div>
<div class="vl" style="left:1342.0px;top:108px;height:27px"></div>
<div class="t" style="left:517.6px;top:114.0px;">Enabled</div>
<div class="t" style="left:592.7px;top:114.0px;">Node</div>
<div class="t" style="left:695.4px;top:114.0px;">Schedule</div>
<div class="t" style="left:848.1px;top:114.0px;">Next Run</div>
<div class="t" style="left:1001.3px;top:114.0px;">Storage</div>
<div class="t" style="left:1103.75px;top:114.0px;">Comment</div>
<div class="t" style="left:1187px;top:114.0px;">Retention</div>
<div class="t" style="left:1353.75px;top:114.0px;">Selection</div>
<div class="a" style="left:501px;top:138px;width:1175px;height:26px;background:#5b5b5b"></div>
<div class="a" style="left:583px;top:138px;width:101.6px;height:25px;border:1px solid #3d5f99;border-top:none"></div>
<svg style="left:535.5px;top:145.5px" width="14" height="11"><path d="M1.4,4.6 L4.9,8.1 L12,1.2" fill="none" stroke="#f6f6f6" stroke-width="2.9" stroke-linecap="square"/></svg>
<div class="t" style="left:592.7px;top:142.0px;">-- All --</div>
<div class="t" style="left:695.4px;top:142.0px;">00:00</div>
<div class="t" style="left:848.1px;top:142.0px;">2025-09-21 00:00:00</div>
<div class="t" style="left:1001.3px;top:142.0px;">local</div>
<div class="t" style="left:1187px;top:142.0px;">Fallback from storage …</div>
<div class="t" style="left:1353.75px;top:142.0px;">100,101,102,103,104,105,106,107,108,109</div>
<div class="a" style="left:499px;top:135px;width:1181px;height:32px;border:4px solid #e11a1a"></div>
<div class="a" style="left:770px;top:73px;width:73px;height:32.5px;border:4px solid #e11a1a"></div>


<!-- ============ SPLITTER ============ -->
<div class="a" style="left:0;top:488px;width:1680px;height:5px;background:#0d0d0d"></div>
<div class="a" style="left:816px;top:488px;width:49px;height:5px;background:#4a4a4a;border-top:1px solid #666;border-left:1px solid #5a5a5a;border-right:1px solid #5a5a5a"></div>
<svg style="left:836px;top:489.5px" width="11" height="4"><path d="M0,0 H10 L5,3.5 Z" fill="#111"/></svg>

<!-- ============ BOTTOM ============ -->
<div class="a" style="left:5px;top:493px;width:1671px;height:305px;background:#262626"></div>
<div class="btn" style="left:16px;top:499px;width:48px;height:22px;background:#4a7bc8"></div>
<div class="t" style="left:23px;top:502px">Tasks</div>
<div class="t" style="left:81px;top:502px">Cluster log</div>
<div class="hl" style="left:5px;top:528px;width:1671px"></div>
<div class="vl" style="left:5px;top:528px;height:270px"></div>
<div class="a" style="left:6px;top:529px;width:152.5px;height:29px;background:#263548"></div>
<div class="a" style="left:1661px;top:529px;width:15px;height:29px;background:#363636"></div>
<div class="vl" style="left:158.0px;top:529px;height:29px"></div>
<div class="vl" style="left:310.8px;top:529px;height:29px"></div>
<div class="vl" style="left:413.3px;top:529px;height:29px"></div>
<div class="vl" style="left:565.7px;top:529px;height:29px"></div>
<div class="vl" style="left:1425.3px;top:529px;height:29px"></div>
<div class="vl" style="left:1630.3px;top:529px;height:29px"></div>
<div class="hl" style="left:6px;top:558px;width:1670px"></div>
<div class="t" style="left:16px;top:535.0px;">Start Time</div>
<div class="t" style="left:169.3px;top:535.0px;">End Time</div>
<div class="t" style="left:322.4px;top:535.0px;">Node</div>
<div class="t" style="left:424.7px;top:535.0px;">User name</div>
<div class="t" style="left:577.6px;top:535.0px;">Description</div>
<div class="t" style="left:1436.3px;top:535.0px;">Status</div>
<svg style="left:80px;top:535px" width="10" height="16"><path d="M5,1 V14.5 M1,10.5 L5,14.5 L9,10.5" fill="none" stroke="#9a9a9a" stroke-width="1.1"/></svg>
<div class="a" style="left:6px;top:558.5px;width:1655px;height:25px;background:#262626"></div>
<div class="hl" style="left:6px;top:583.0px;width:1655px"></div>
<div class="t" style="left:16px;top:563.0px;">Sep 20 12:33:28</div>
<div class="t" style="left:169.3px;top:563.0px;">Sep 20 12:33:38</div>
<div class="t" style="left:322.4px;top:563.0px;">pve</div>
<div class="t" style="left:424.7px;top:563.0px;">root@pam</div>
<div class="t" style="left:577.6px;top:563.0px;">Shell</div>
<div class="t" style="left:1436.3px;top:563.0px;">OK</div>
<svg style="left:1640px;top:563.2px" width="11" height="13"><path d="M2,1.5 L8,6.5 L2,11.5" fill="none" stroke="#ececec" stroke-width="2.4"/></svg>
<div class="a" style="left:6px;top:583.5px;width:1655px;height:25px;background:#1b1b1b"></div>
<div class="hl" style="left:6px;top:608.0px;width:1655px"></div>
<div class="t" style="left:16px;top:588.0px;">Sep 20 12:30:25</div>
<div class="t" style="left:169.3px;top:588.0px;">Sep 20 12:31:32</div>
<div class="t" style="left:322.4px;top:588.0px;">pve</div>
<div class="t" style="left:424.7px;top:588.0px;">root@pam</div>
<div class="t" style="left:577.6px;top:588.0px;">Shell</div>
<div class="t" style="left:1436.3px;top:588.0px;">OK</div>
<svg style="left:1640px;top:588.2px" width="11" height="13"><path d="M2,1.5 L8,6.5 L2,11.5" fill="none" stroke="#ececec" stroke-width="2.4"/></svg>
<div class="a" style="left:6px;top:608.5px;width:1655px;height:25px;background:#262626"></div>
<div class="hl" style="left:6px;top:633.0px;width:1655px"></div>
<div class="t" style="left:16px;top:613.0px;">Sep 20 12:30:08</div>
<div class="t" style="left:169.3px;top:613.0px;">Sep 20 12:30:11</div>
<div class="t" style="left:322.4px;top:613.0px;">pve</div>
<div class="t" style="left:424.7px;top:613.0px;">root@pam</div>
<div class="t" style="left:577.6px;top:613.0px;">VM/CT 109 - Console</div>
<div class="t" style="left:1436.3px;top:613.0px;">OK</div>
<svg style="left:1640px;top:613.2px" width="11" height="13"><path d="M2,1.5 L8,6.5 L2,11.5" fill="none" stroke="#ececec" stroke-width="2.4"/></svg>
<div class="a" style="left:6px;top:633.5px;width:1655px;height:25px;background:#1b1b1b"></div>
<div class="hl" style="left:6px;top:658.0px;width:1655px"></div>
<div class="t" style="left:16px;top:638.0px;">Sep 20 12:25:19</div>
<div class="t" style="left:169.3px;top:638.0px;">Sep 20 12:30:08</div>
<div class="t" style="left:322.4px;top:638.0px;">pve</div>
<div class="t" style="left:424.7px;top:638.0px;">root@pam</div>
<div class="t" style="left:577.6px;top:638.0px;">Shell</div>
<div class="t" style="left:1436.3px;top:638.0px;">OK</div>
<svg style="left:1640px;top:638.2px" width="11" height="13"><path d="M2,1.5 L8,6.5 L2,11.5" fill="none" stroke="#ececec" stroke-width="2.4"/></svg>
<div class="a" style="left:6px;top:658.5px;width:1655px;height:25px;background:#262626"></div>
<div class="hl" style="left:6px;top:683.0px;width:1655px"></div>
<div class="t" style="left:16px;top:663.0px;">Sep 20 12:23:37</div>
<div class="t" style="left:169.3px;top:663.0px;">Sep 20 12:25:19</div>
<div class="t" style="left:322.4px;top:663.0px;">pve</div>
<div class="t" style="left:424.7px;top:663.0px;">root@pam</div>
<div class="t" style="left:577.6px;top:663.0px;">VM/CT 109 - Console</div>
<div class="t" style="left:1436.3px;top:663.0px;">OK</div>
<svg style="left:1640px;top:663.2px" width="11" height="13"><path d="M2,1.5 L8,6.5 L2,11.5" fill="none" stroke="#ececec" stroke-width="2.4"/></svg>
<div class="a" style="left:6px;top:683.5px;width:1655px;height:25px;background:#1b1b1b"></div>
<div class="hl" style="left:6px;top:708.0px;width:1655px"></div>
<div class="t" style="left:16px;top:688.0px;">Sep 20 12:23:32</div>
<div class="t" style="left:169.3px;top:688.0px;">Sep 20 12:23:35</div>
<div class="t" style="left:322.4px;top:688.0px;">pve</div>
<div class="t" style="left:424.7px;top:688.0px;">root@pam</div>
<div class="t" style="left:577.6px;top:688.0px;">CT 109 - Reboot</div>
<div class="t" style="left:1436.3px;top:688.0px;">OK</div>
<svg style="left:1640px;top:688.2px" width="11" height="13"><path d="M2,1.5 L8,6.5 L2,11.5" fill="none" stroke="#ececec" stroke-width="2.4"/></svg>
<div class="a" style="left:6px;top:708.5px;width:1655px;height:25px;background:#262626"></div>
<div class="hl" style="left:6px;top:733.0px;width:1655px"></div>
<div class="t" style="left:16px;top:713.0px;">Sep 20 12:23:26</div>
<div class="t" style="left:169.3px;top:713.0px;">Sep 20 12:23:36</div>
<div class="t" style="left:322.4px;top:713.0px;">pve</div>
<div class="t" style="left:424.7px;top:713.0px;">root@pam</div>
<div class="t" style="left:577.6px;top:713.0px;">VM/CT 109 - Console</div>
<div class="t" style="left:1436.3px;top:713.0px;">OK</div>
<svg style="left:1640px;top:713.2px" width="11" height="13"><path d="M2,1.5 L8,6.5 L2,11.5" fill="none" stroke="#ececec" stroke-width="2.4"/></svg>
<div class="a" style="left:6px;top:733.5px;width:1655px;height:25px;background:#1b1b1b"></div>
<div class="hl" style="left:6px;top:758.0px;width:1655px"></div>
<div class="t" style="left:16px;top:738.0px;">Sep 20 12:23:05</div>
<div class="t" style="left:169.3px;top:738.0px;">Sep 20 12:23:25</div>
<div class="t" style="left:322.4px;top:738.0px;">pve</div>
<div class="t" style="left:424.7px;top:738.0px;">root@pam</div>
<div class="t" style="left:577.6px;top:738.0px;">VM/CT 109 - Console</div>
<div class="t" style="left:1436.3px;top:738.0px;">OK</div>
<svg style="left:1640px;top:738.2px" width="11" height="13"><path d="M2,1.5 L8,6.5 L2,11.5" fill="none" stroke="#ececec" stroke-width="2.4"/></svg>
<div class="a" style="left:6px;top:758.5px;width:1655px;height:25px;background:#262626"></div>
<div class="hl" style="left:6px;top:783.0px;width:1655px"></div>
<div class="t" style="left:16px;top:763.0px;">Sep 20 12:17:20</div>
<div class="t" style="left:169.3px;top:763.0px;">Sep 20 12:23:05</div>
<div class="t" style="left:322.4px;top:763.0px;">pve</div>
<div class="t" style="left:424.7px;top:763.0px;">root@pam</div>
<div class="t" style="left:577.6px;top:763.0px;">Shell</div>
<div class="t" style="left:1436.3px;top:763.0px;">OK</div>
<svg style="left:1640px;top:763.2px" width="11" height="13"><path d="M2,1.5 L8,6.5 L2,11.5" fill="none" stroke="#ececec" stroke-width="2.4"/></svg>
<div class="a" style="left:6px;top:783.5px;width:1655px;height:25px;background:#1b1b1b"></div>
<div class="hl" style="left:6px;top:808.0px;width:1655px"></div>
<div class="t" style="left:16px;top:788.0px;">Sep 20 12:12:43</div>
<div class="t" style="left:169.3px;top:788.0px;">Sep 20 12:14:57</div>
<div class="t" style="left:322.4px;top:788.0px;">pve</div>
<div class="t" style="left:424.7px;top:788.0px;">root@pam</div>
<div class="t" style="left:577.6px;top:788.0px;">ZFS Storage pbs-datastore - Create</div>
<div class="t" style="left:1436.3px;top:788.0px;">OK</div>
<svg style="left:1640px;top:788.2px" width="11" height="13"><path d="M2,1.5 L8,6.5 L2,11.5" fill="none" stroke="#ececec" stroke-width="2.4"/></svg>
<div class="a" style="left:1661px;top:558.5px;width:15px;height:240px;background:#2b2b2b"></div>
<svg style="left:1663px;top:562px" width="11" height="8"><path d="M0.5,7.5 L5.5,1 L10.5,7.5 Z" fill="#9a9a9a"/></svg>
<div class="a" style="left:1664.5px;top:577px;width:9px;height:79px;border-radius:4.5px;background:#9a9a9a"></div>
<svg style="left:1663px;top:791px" width="11" height="8"><path d="M0.5,0.5 L5.5,7 L10.5,0.5 Z" fill="#9a9a9a"/></svg>


</body></html>
